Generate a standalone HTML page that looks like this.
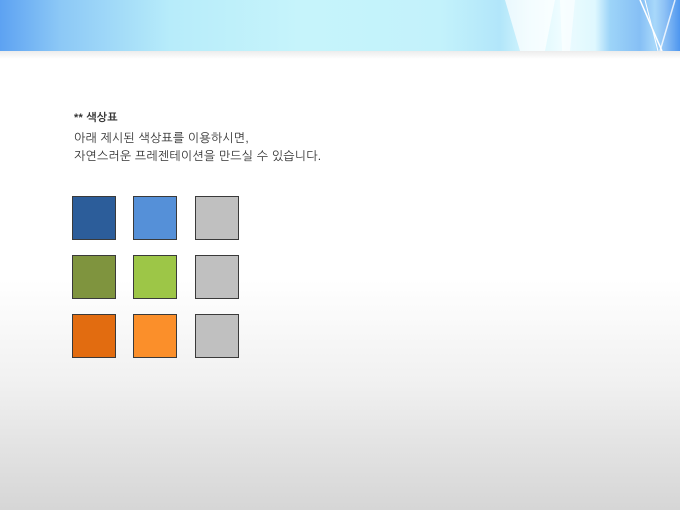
<!DOCTYPE html>
<html><head><meta charset="utf-8"><style>
body{margin:0;width:680px;height:510px;overflow:hidden;position:relative;font-family:"Liberation Sans","NanumGothic","Noto Sans CJK KR",sans-serif;
background:linear-gradient(to bottom,#fff 0,#fff 280px,#f1f1f1 380px,#dedede 470px,#d6d6d6 510px);}
.hdr{position:absolute;left:0;top:0;width:680px;height:51px;
background:linear-gradient(to right,#5da2f2 0,#8cc8f6 60px,#b7ecfa 170px,#c6f4fb 300px,#c3f2fb 440px,#b2e6fa 500px,#d8f7fd 530px,#eefcff 560px,#dff8fe 595px,#9dd4f8 610px,#86bff5 640px,#a8d8fa 655px,#8cc0f5 665px,#4e96ef 680px);}
.shade{position:absolute;left:0;top:51px;width:680px;height:8px;background:linear-gradient(#ececec,#fff);}
.t{position:absolute;left:74px;font-size:12px;letter-spacing:0.2px;color:#333;white-space:nowrap}
.sq{position:absolute;width:42px;height:42px;border:1px solid #3a3a3a;}
</style></head><body>
<div class="hdr"></div>
<svg style="position:absolute;left:0;top:0" width="680" height="51">
<polygon points="505,0 555,0 545,51 520,51" fill="#fff" opacity="0.7"/>
<polygon points="560,0 575,0 570,51 562,51" fill="#fff" opacity="0.6"/>
<line x1="640" y1="0" x2="662" y2="51" stroke="#fff" stroke-width="1.5"/>
<line x1="645" y1="0" x2="658" y2="51" stroke="#fff" stroke-width="1"/>
<line x1="675" y1="0" x2="660" y2="51" stroke="#fff" stroke-width="1.5" opacity="0.8"/>
</svg>
<div class="shade"></div>
<div class="t" style="top:112px;font-weight:bold;font-size:11px">** 색상표</div>
<div class="t" style="top:131px;">아래 제시된 색상표를 이용하시면,</div>
<div class="t" style="top:149px;">자연스러운 프레젠테이션을 만드실 수 있습니다.</div>
<div class="sq" style="left:72px;top:196px;background:#2c5d9a"></div>
<div class="sq" style="left:133px;top:196px;background:#5590d8"></div>
<div class="sq" style="left:195px;top:196px;background:#c0c0c0"></div>
<div class="sq" style="left:72px;top:255px;background:#7f943e"></div>
<div class="sq" style="left:133px;top:255px;background:#9dc647"></div>
<div class="sq" style="left:195px;top:255px;background:#c0c0c0"></div>
<div class="sq" style="left:72px;top:314px;background:#e26c10"></div>
<div class="sq" style="left:133px;top:314px;background:#fb8f2a"></div>
<div class="sq" style="left:195px;top:314px;background:#c0c0c0"></div>
</body></html>
